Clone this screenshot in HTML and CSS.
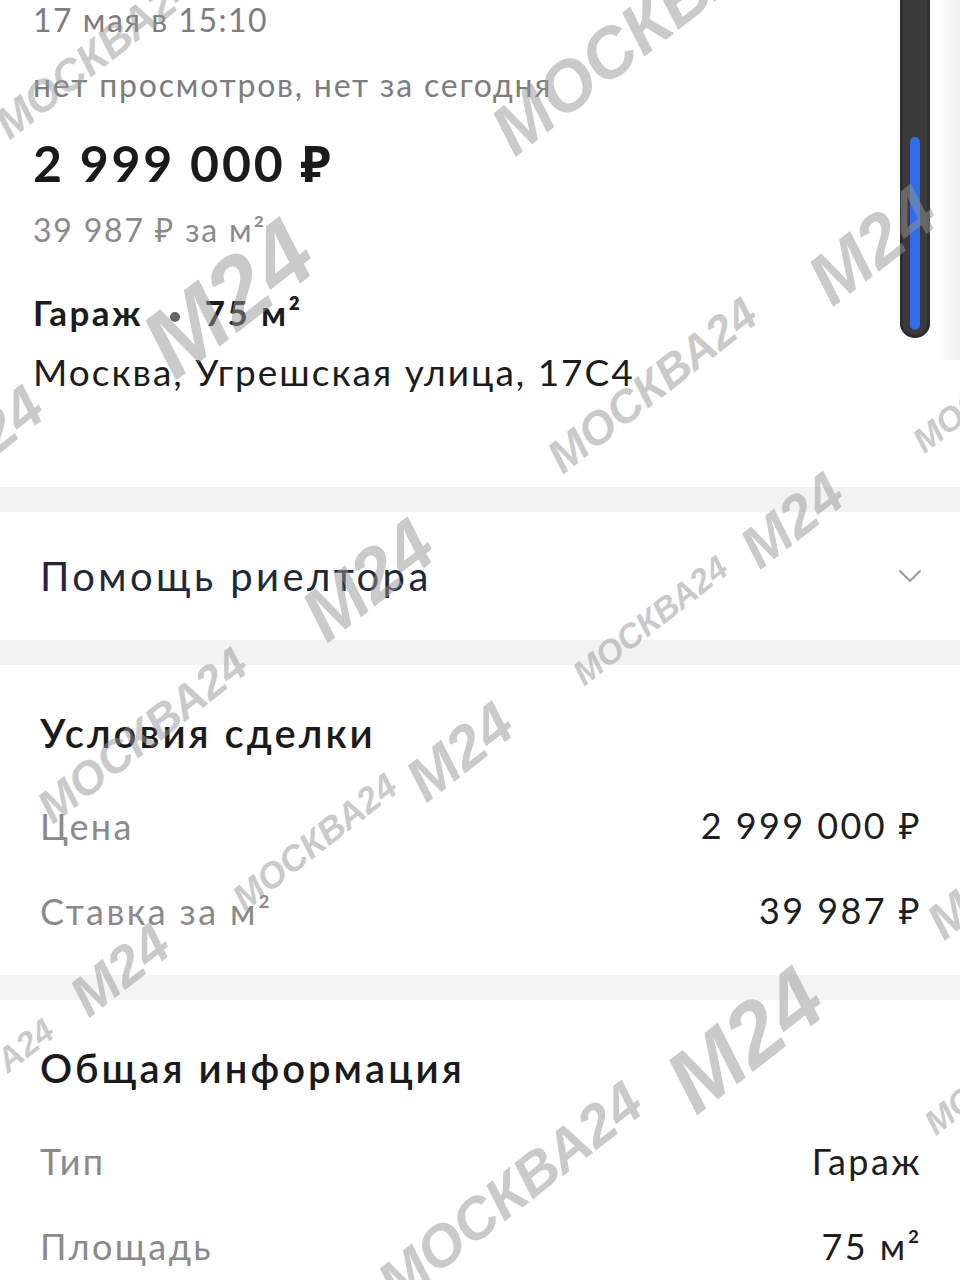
FILE: index.html
```html
<!DOCTYPE html>
<html lang="ru">
<head>
  <meta charset="UTF-8">
  <meta name="viewport" content="width=device-width, initial-scale=1.0">
  <title>Гараж, 75 м²</title>
  <link rel="stylesheet" href="styles.css">
</head>
<body>
  <div class="page">
    <!-- watermarks -->
    <div class="marks">
      <span class="wm" style="left:95px;top:55px;font-size:44px">МОСКВА24</span>
      <span class="wm" style="left:620px;top:45px;font-size:70px">МОСКВА</span>
      <span class="wm" style="left:228px;top:298px;font-size:96px">M24</span>
      <span class="wm" style="left:10px;top:420px;font-size:60px">24</span>
      <span class="wm" style="left:872px;top:245px;font-size:72px">M24</span>
      <span class="wm" style="left:652px;top:385px;font-size:46px">МОСКВА24</span>
      <span class="wm" style="left:948px;top:420px;font-size:34px">МОС</span>
      <span class="wm" style="left:368px;top:580px;font-size:74px">M24</span>
      <span class="wm" style="left:650px;top:620px;font-size:34px">МОСКВА24</span>
      <span class="wm" style="left:792px;top:520px;font-size:58px">M24</span>
      <span class="wm" style="left:142px;top:735px;font-size:46px">МОСКВА24</span>
      <span class="wm" style="left:460px;top:752px;font-size:60px">M24</span>
      <span class="wm" style="left:315px;top:842px;font-size:36px">МОСКВА24</span>
      <span class="wm" style="left:120px;top:970px;font-size:56px">M24</span>
      <span class="wm" style="left:25px;top:1045px;font-size:34px">A24</span>
      <span class="wm" style="left:745px;top:1040px;font-size:88px">M24</span>
      <span class="wm" style="left:510px;top:1192px;font-size:58px">МОСКВА24</span>
      <span class="wm" style="left:950px;top:915px;font-size:50px">M</span>
      <span class="wm" style="left:950px;top:1110px;font-size:34px">МО</span>
    </div>

    <section class="summary">
      <div class="date">17 мая в 15:10</div>
      <div class="views">нет просмотров, нет за сегодня</div>
      <div class="price">2 999 000 ₽</div>
      <div class="per-meter">39 987 ₽ за м²</div>
      <div class="kind">Гараж <span class="dot"></span> 75 м²</div>
      <div class="address">Москва, Угрешская улица, 17С4</div>
    </section>

    <div class="band"></div>

    <section class="realtor">
      <span>Помощь риелтора</span>
      <svg class="chevron" width="24" height="14" viewBox="0 0 24 14">
        <path d="M2 2 L12 12 L22 2" fill="none" stroke="#9a9a9a" stroke-width="2" stroke-linecap="round" stroke-linejoin="round"/>
      </svg>
    </section>

    <div class="band"></div>

    <section class="info">
      <h2>Условия сделки</h2>
      <div class="row"><span class="label">Цена</span><span class="value">2 999 000 ₽</span></div>
      <div class="row"><span class="label">Ставка за м²</span><span class="value">39 987 ₽</span></div>
    </section>

    <div class="band thin"></div>

    <section class="info">
      <h2>Общая информация</h2>
      <div class="row"><span class="label">Тип</span><span class="value">Гараж</span></div>
      <div class="row"><span class="label">Площадь</span><span class="value">75 м²</span></div>
    </section>

    <!-- scroll indicator -->
    <div class="scroller"><div class="thumb"></div></div>
    <div class="edge-shadow"></div>
  </div>
</body>
</html>
```

FILE: styles.css
```css
body {
  margin: 0;
  background-color: #fff;
  font-family: Lato, "Noto Sans", sans-serif;
  color: #1c1c1c;
}
.page {
  position: relative;
  width: 960px;
  height: 1280px;
  overflow: hidden;
}
section, .band {
  position: relative;
}
.summary {
  padding: 0 0 92px 33px;
}
.date {
  font-size: 32px;
  line-height: 40px;
  letter-spacing: 1.5px;
  color: #7d7d7d;
}
.views {
  margin-top: 25px;
  font-size: 32px;
  line-height: 40px;
  letter-spacing: 1.8px;
  color: #7d7d7d;
}
.price {
  margin-top: 28px;
  font-size: 50px;
  line-height: 60px;
  font-weight: 700;
  letter-spacing: 2.8px;
  color: #1a1a1a;
}
.per-meter {
  margin-top: 17px;
  font-size: 32px;
  line-height: 40px;
  letter-spacing: 1.8px;
  color: #8a8a8a;
}
.kind {
  margin-top: 39px;
  font-size: 35px;
  line-height: 46px;
  font-weight: 700;
  letter-spacing: 2.4px;
}
.kind .dot {
  display: inline-block;
  width: 10px;
  height: 10px;
  margin: 0 14px 0 16px;
  border-radius: 50%;
  background-color: #666;
  vertical-align: middle;
}
.address {
  margin-top: 14px;
  font-size: 37px;
  line-height: 46px;
  letter-spacing: 2px;
}
.band {
  height: 25px;
  background-color: #f2f2f2;
}
.band.thin {
  background-color: #f4f4f4;
}
.realtor {
  height: 128px;
  padding: 0 40px;
  display: flex;
  align-items: center;
  justify-content: space-between;
  font-size: 40px;
  letter-spacing: 3.4px;
  color: #22273a;
}
.realtor .chevron {
  margin-right: -2px;
}
.info {
  padding: 43px 40px 22px;
}
.info h2 {
  margin: 0 0 25px;
  font-size: 40px;
  line-height: 50px;
  font-weight: 600;
  letter-spacing: 3px;
  color: #1a1a1a;
}
.row {
  height: 85px;
  display: flex;
  align-items: center;
  justify-content: space-between;
  font-size: 36px;
  letter-spacing: 2.4px;
}
.row .label {
  color: #8a8a8a;
}
.row .value {
  margin-right: -2px;
  color: #1e1e1e;
}
.scroller {
  position: absolute;
  top: -20px;
  left: 900px;
  width: 30px;
  height: 358px;
  border-radius: 0 0 15px 15px;
  background-color: #3b3b3b;
  box-shadow: inset 0 0 0 3px #2f2f2f;
}
.scroller .thumb {
  position: absolute;
  left: 10px;
  bottom: 8px;
  width: 10px;
  height: 193px;
  border-radius: 5px;
  background-color: #2f6ee8;
}
.edge-shadow {
  position: absolute;
  top: 0;
  right: 0;
  width: 24px;
  height: 360px;
  background: linear-gradient(to right, rgba(0, 0, 0, 0), rgba(0, 0, 0, 0.06));
}
.marks {
  position: absolute;
  inset: 0;
  z-index: 2;
  pointer-events: none;
}
.wm {
  position: absolute;
  transform: translate(-50%, -50%) rotate(-38deg);
  font-family: "Liberation Sans", Arial, sans-serif;
  font-weight: 700;
  font-style: italic;
  color: rgba(150, 150, 150, 0.5);
  white-space: nowrap;
  line-height: 1;
}
```
